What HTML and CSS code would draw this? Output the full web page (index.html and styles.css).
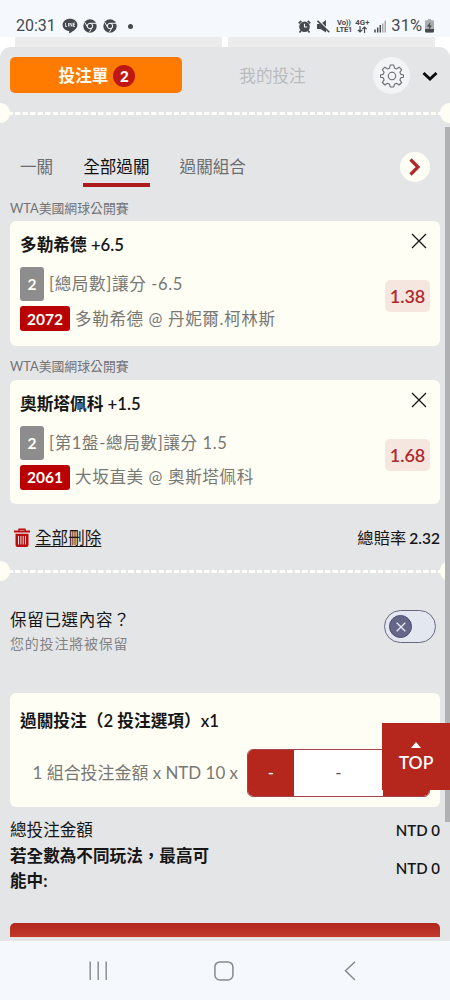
FILE: index.html
```html
<!DOCTYPE html>
<html lang="zh-Hant">
<head>
<meta charset="utf-8">
<title>投注單</title>
<link rel="stylesheet" href="styles.css">
</head>
<body>
<div class="phone">
  <header class="status">
    <span class="clock">20:31</span>
    <svg class="ic-line" width="16" height="16" viewBox="0 0 16 16"><path d="M8 .8C3.9.8.6 3.5.6 6.9c0 3 2.600 5.500 6.200 6 .6.1.4.8.3 1.800 0 .5.3.6.8.3 3.200-1.700 7.500-4.500 7.500-8.100C15.400 3.500 12.100.8 8 .8z" fill="#46494d"/><path d="M3.500 5v3.500h1.600M6.500 5v3.500M8 8.500V5l2 3.500V5M13 5h-1.500v3.500H13M11.500 6.700H13" fill="none" stroke="#f5f9fe" stroke-width=".8"/></svg>
    <svg class="ic-chrome" width="14" height="14" viewBox="0 0 14 14"><circle cx="7" cy="7" r="6.700" fill="#46494d"/><circle cx="7" cy="7" r="2.700" fill="#46494d" stroke="#f5f9fe"/><path d="M7 4.300h6M4.700 8.300 1.700 3.300M9.300 8.300l-3 5" stroke="#f5f9fe" fill="none"/></svg>
    <svg class="ic-chrome" width="14" height="14" viewBox="0 0 14 14"><circle cx="7" cy="7" r="6.700" fill="#46494d"/><circle cx="7" cy="7" r="2.700" fill="#46494d" stroke="#f5f9fe"/><path d="M7 4.300h6M4.700 8.300 1.700 3.300M9.300 8.300l-3 5" stroke="#f5f9fe" fill="none"/></svg>
    <i class="dot"></i>
    <div class="status-right">
      <svg class="ic-alarm" width="13" height="13" viewBox="0 0 13 13"><circle cx="6.500" cy="6.800" r="5.300" fill="#46494d"/><path d="M.7 3.300 3.300.8M12.300 3.300 9.700.8M3 10.500l-1.500 2M10 10.500l1.500 2" stroke="#46494d" stroke-width="1.700"/><path d="M6.500 3.700V7h2.700" fill="none" stroke="#f5f9fe" stroke-width="1.100"/></svg>
      <svg class="ic-mute" width="13" height="13" viewBox="0 0 13 13"><path d="M0 4h3.500l5.500-4v12.500L3.500 9H0z" fill="#46494d"/><path d="M1 0l12 11.500" stroke="#f5f9fe" stroke-width="1.500"/><path d="M.5.8l11.800 11.500" stroke="#46494d" stroke-width="1.600"/></svg>
      <span class="net volte">Vo))<br>LTE1</span>
      <span class="net data">4G+<svg width="10" height="7" viewBox="0 0 10 7"><path d="M3 0v6M.8 3.800 3 6l2.200-2.200M7.500 7V1M5.300 3.200 7.500 1l2.200 2.200" fill="none" stroke="#46494d" stroke-width="1.200"/></svg></span>
      <svg class="ic-signal" width="12" height="13" viewBox="0 0 12 13"><path d="M1 12.500v-3M3.700 12.500v-5M6.300 12.500V5" stroke="#46494d" stroke-width="1.500"/><path d="M8.800 12.500v-9M11.200 12.500V.8" stroke="#9a9da1" stroke-width="1.300"/></svg>
      <span class="pct">31%</span>
      <svg class="ic-batt" width="9" height="14" viewBox="0 0 9 14"><path d="M3 0h3v1.300h1.800Q9 1.300 9 2.500V12q0 1.500-1.500 1.500h-6Q0 13.500 0 12V2.500q0-1.200 1.200-1.200H3z" fill="#aaadb1"/><path d="M0 10h9v2q0 1.500-1.500 1.500h-6Q0 13.500 0 12z" fill="#46494d"/><path d="M5.500 3 1.800 7.500h2.500L3.500 11 7 6.500H4.700z" fill="#46494d"/></svg>
    </div>
  </header>
  <div class="backdrop"><i></i><i></i></div>

  <main class="sheet">
    <div class="topbar">
      <div class="tab-slip">投注單<b>2</b></div>
      <div class="tab-mine">我的投注</div>
      <div class="gear"><svg width="24" height="24" viewBox="0 0 24 24" fill="none" stroke="#686b70" stroke-width="1.100" stroke-linejoin="round"><circle cx="12" cy="12" r="3.700"/><path d="M10.200 1h3.600l.6 3 2.100.9 2.600-1.700 2.500 2.500-1.700 2.600.9 2.100 2.700.6v2.200l-2.700.6-.9 2.100 1.700 2.600-2.500 2.500-2.600-1.700-2.100.9-.6 2.800h-3.600l-.6-2.800-2.100-.9-2.600 1.700-2.500-2.500 1.700-2.600-.9-2.100-2.700-.6V11l2.700-.6.9-2.100-1.700-2.600 2.500-2.500 2.600 1.700 2.100-.9z"/></svg></div>
      <svg class="chev" width="16" height="11" viewBox="0 0 16 11"><path d="M1.500 2 8 8l6.500-6" fill="none" stroke="#0b0b0b" stroke-width="3"/></svg>
    </div>
    <div class="tear"></div>

    <nav class="modes">
      <span>一關</span><span class="on">全部過關</span><span>過關組合</span>
      <button class="next"><svg width="12" height="18" viewBox="0 0 12 18"><path d="M1.500 1.500 9 9l-7.500 7.500" fill="none" stroke="#b1272a" stroke-width="3.200"/></svg></button>
    </nav>

    <h3 class="league">WTA美國網球公開賽</h3>
    <section class="bet">
      <div class="info">
        <h2>多勒希德 +6.5</h2>
        <p class="market"><b>2</b>[總局數]讓分 -6.5</p>
        <p class="match"><b>2072</b>多勒希德 @ 丹妮爾.柯林斯</p>
      </div>
      <div class="side"><svg width="16" height="16" viewBox="0 0 16 16"><path d="M1 1l14 14M15 1 1 15" stroke="#161616" stroke-width="1.300"/></svg><span class="odds">1.38</span></div>
    </section>

    <h3 class="league second">WTA美國網球公開賽</h3>
    <section class="bet">
      <div class="info">
        <h2>奧斯塔佩科 +1.5</h2>
        <p class="market"><b>2</b>[第1盤-總局數]讓分 1.5</p>
        <p class="match"><b>2061</b>大坂直美 @ 奧斯塔佩科</p>
      </div>
      <div class="side"><svg width="16" height="16" viewBox="0 0 16 16"><path d="M1 1l14 14M15 1 1 15" stroke="#161616" stroke-width="1.300"/></svg><span class="odds">1.68</span></div>
    </section>

    <div class="summary">
      <svg width="16" height="20" viewBox="0 0 16 20"><path d="M5 3V1.200h6V3" fill="none" stroke="#b90c0f" stroke-width="1.400"/><path d="M0 2.500h16v2H0zM1.500 5.800h13V17q0 2-2 2h-9q-2 0-2-2z" fill="#b90c0f"/><path d="M4.500 8v8.500M6.900 8v8.500M9.200 8v8.500M11.500 8v8.500" stroke="#f0dcdc" stroke-width="1"/></svg>
      <a>全部刪除</a>
      <span>總賠率 <b>2.32</b></span>
    </div>
    <div class="tear"></div>

    <div class="keep">
      <div><p class="q">保留已選內容？</p><p class="hint">您的投注將被保留</p></div>
      <div class="toggle"><i><svg width="10" height="10" viewBox="0 0 10 10"><path d="M.7.7l8.600 8.600M9.300.7.7 9.300" stroke="#e8ebf8" stroke-width="1.300"/></svg></i></div>
    </div>

    <section class="stake">
      <h2>過關投注（2 投注選項）x1</h2>
      <div class="amount"><span>1 組合投注金額 x NTD 10 x</span><div class="stepper"><button>-</button><em>-</em><button></button></div></div>
    </section>

    <div class="totals">
      <p><span>總投注金額</span><b>NTD 0</b></p>
      <p class="strong"><span>若全數為不同玩法，最高可能中:</span><b>NTD 0</b></p>
    </div>
    <div class="submit"></div>
    <div class="scrollbar"></div>
    <div class="to-top"><i></i>TOP</div>
  </main>

  <footer class="navbar">
    <svg width="20" height="20" viewBox="0 0 20 20"><path d="M2.200.5v18.500M10.200.5v18.500M18.200.5v18.500" stroke="#85888c" stroke-width="1.400"/></svg>
    <svg class="home" width="20" height="20" viewBox="0 0 20 20"><rect x=".9" y=".9" width="18" height="18" rx="5" fill="none" stroke="#85888c" stroke-width="1.500"/></svg>
    <svg width="12" height="20" viewBox="0 0 12 20"><path d="M11 .7 1.500 9.700 11 19" fill="none" stroke="#85888c" stroke-width="1.500"/></svg>
  </footer>
</div>
</body>
</html>
```
FILE: styles.css
```css
* { box-sizing: border-box; margin: 0; padding: 0; }
body { width: 450px; height: 1000px; overflow: hidden; font-family: Lato, "Noto Sans CJK TC", sans-serif; font-size: 16.6px; line-height: 24px; color: #161616; background: #fff; }
.phone { height: 1000px; display: flex; flex-direction: column; }
svg { display: block; flex: none; }
i { display: block; }
button { border: 0; font: inherit; }

.status { height: 37px; background: #f5f9fe; padding: 15px 16px 0 16px; display: flex; align-items: center; color: #46494d; font-family: Roboto, sans-serif; font-size: 16.5px; }
.clock { width: 46px; font-size: 16px; }
.ic-line { margin-right: 5px; }
.ic-chrome { margin-right: 6px; }
.dot { width: 5px; height: 5px; border-radius: 50%; background: #46494d; margin-left: 5px; }
.status-right { margin-left: auto; display: flex; align-items: center; }
.ic-alarm, .ic-mute { margin-right: 6px; }
.net { font-size: 8px; line-height: 7px; font-weight: 700; text-align: center; }
.volte { width: 15px; white-space: nowrap; font-size: 7.600px; letter-spacing: -.2px; }
.data { width: 14px; margin: 0 5px 0 4px; font-size: 7.800px; }
.data svg { margin: 0 auto; }
.pct { margin: 0 3px 0 5px; }

.backdrop { height: 10px; padding: 0 15px; display: flex; gap: 6px; }
.backdrop i { flex: 1; background: #ececed; }

.sheet { position: relative; height: 894px; background: #e4e5e7; border-radius: 11px 11px 0 0; padding: 0 10px; flex: none; }
.topbar { height: 56px; padding-top: 10px; display: flex; align-items: flex-start; }
.tab-slip, .tab-mine { height: 36px; display: flex; align-items: center; justify-content: center; padding-top: 1px; }
.tab-slip { width: 172px; background: #ff7b00; color: #fffdf4; border-radius: 5px; font-weight: 700; padding-left: 2px; }
.tab-slip b { width: 22px; height: 22px; border-radius: 50%; background: #bf1714; text-align: center; line-height: 22px; font-size: 15px; margin-left: 5px; }
.tab-mine { width: 181px; color: #b9bbbd; }
.gear { width: 37px; height: 37px; margin-left: 10px; border-radius: 50%; background: #f3f4f6; display: grid; place-items: center; }
.chev { margin: 14px 0 0 12px; }

.tear { height: 20px; margin: 0 -10px; background: radial-gradient(circle at 0 10px, #fffef5 9.5px, transparent 10.500px), radial-gradient(circle at 450px 10px, #fffef5 9.500px, transparent 10.500px), repeating-linear-gradient(90deg, #fffef8 0 5px, transparent 5.500px 7.200px, #fffef8 7.560px) 0 9px / 100% 3px no-repeat; }

.modes { height: 72px; padding: 32px 10px 0; display: flex; gap: 30px; color: #6b6d70; }
.modes span { height: 32px; }
.modes .on { color: #111; border-bottom: 4px solid #ad1b1e; }
.next { width: 30px; height: 30px; border-radius: 50%; background: #fffef5; margin: -3px 0 0 auto; display: grid; place-items: center; }
.league { height: 26px; line-height: 26px; font-size: 12.850px; font-weight: 400; color: #717376; }
.league.second { height: 34px; line-height: 41px; }

.bet { height: 124.500px; border-radius: 6px; background: #fffef5; padding: 12px 10px 0 10px; display: flex; justify-content: space-between; }
h2 { font-size: 16.700px; line-height: 24px; font-weight: 600; }
.market, .match { display: flex; align-items: center; color: #777874; letter-spacing: .6px; white-space: nowrap; }
.market { height: 34px; margin-top: 10px; }
.match { height: 25px; margin-top: 5px; }
.market b, .match b { display: grid; place-items: center; height: 100%; letter-spacing: 0; color: #fffef5; font-size: 15.500px; border-radius: 3px; margin-right: 5px; }
.market b { width: 24px; background: #8d8d8d; }
.match b { width: 50px; background: #b90003; }
.side { width: 45px; }
.side svg { margin: 0 0 0 26px; }
.odds { display: grid; place-items: center; height: 32px; margin-top: 31px; border-radius: 5px; background: #f5e7e0; color: #b1282a; font-size: 18px; font-weight: 600; }

.summary { height: 57px; padding: 10px 0 0 4px; display: flex; align-items: center; }
.summary a { margin-left: 5px; text-decoration: underline; text-underline-offset: 2px; }
.summary span { margin-left: auto; font-size: 16.300px; }
.summary b { font-size: 15.500px; font-weight: 600; margin-left: -1px; }

.keep { height: 112px; padding: 27px 4px 0 0; display: flex; justify-content: space-between; }
.q { letter-spacing: .7px; font-size: 16.500px; }
.hint { font-size: 14px; letter-spacing: .8px; line-height: 23px; color: #818386; }
.toggle { width: 52px; height: 33px; border: 1px solid #686980; border-radius: 17px; background: #e3e7ef; margin-top: 2px; padding: 4px; }
.toggle i { width: 23px; height: 23px; border-radius: 50%; border: 1px solid #4b4b73; background: #666788; display: grid; place-items: center; }

.stake { height: 114px; border-radius: 6px; background: #fffef5; padding: 16px 10px 0; }
.amount { display: flex; align-items: center; justify-content: flex-end; gap: 9px; margin-top: 16px; color: #777873; font-size: 16.950px; white-space: nowrap; }
.stepper { width: 183px; height: 48px; display: flex; border: 1px solid #a64549; border-radius: 6px; overflow: hidden; background: #fff; }
.stepper button { width: 46px; background: #b5261d; color: #fff; }
.stepper em { flex: 1; display: grid; place-items: center; font-style: normal; color: #555; }

.totals { height: 116px; padding-top: 11px; }
.totals p { display: flex; justify-content: space-between; align-items: center; line-height: 25.500px; }
.totals span { width: 202px; }
.totals b { font-size: 15px; font-weight: 600; }
.strong { font-weight: 700; }
.submit { height: 15px; border-radius: 5px 5px 0 0; background: linear-gradient(#b2261d, #c13a2c); border-bottom: 1px solid #f0dcda; }

.scrollbar { position: absolute; right: 0; top: 80px; width: 5px; height: 695px; background: #afb1b3; }
.to-top { position: absolute; right: 0; top: 676px; width: 68px; height: 67px; background: #b5261d; color: #fff; display: flex; flex-direction: column; align-items: center; font-size: 17.500px; font-weight: 600; padding-top: 19px; line-height: 30px; }
.to-top i { border: 5px solid transparent; border-top: 0; border-bottom-color: #fff; border-bottom-width: 6px; }

.navbar { flex: 1; background: #f5f9fe; padding: 20px 94px 0 88px; display: flex; justify-content: space-between; }
.home { margin-right: 4px; }
```
